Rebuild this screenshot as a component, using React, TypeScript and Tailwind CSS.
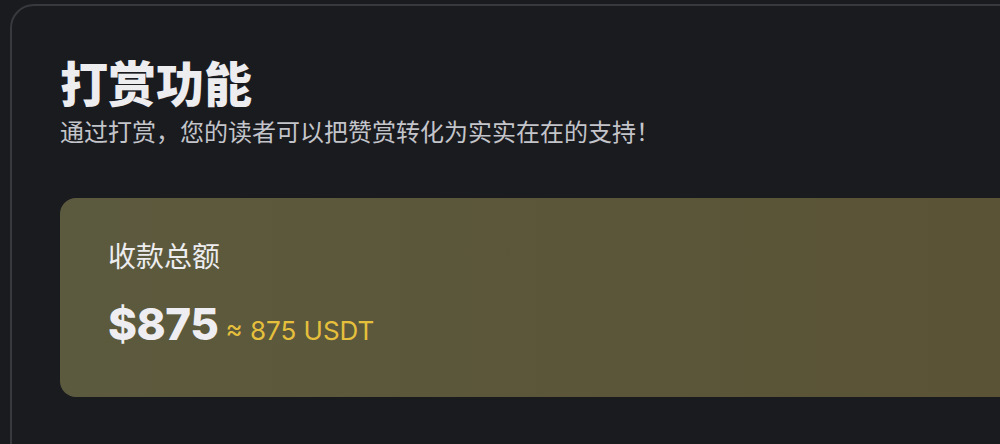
import React from 'react'

const cjk = { fontFamily: 'Inter, "Noto Sans CJK SC", sans-serif' }

export default function App() {
  return (
    <div className="h-[444px] w-[1000px] overflow-hidden bg-[#1a1b1f] pl-[10px] pt-1" style={cjk}>
      <div className="h-[600px] w-[1100px] rounded-[24px] border-2 border-[#38393e] bg-[#1a1b1f] pl-[48px] pt-[51px]">
        <h1 className="text-[48px] font-extrabold leading-[56px] text-[#ededf0]">打赏功能</h1>
        <p className="mt-1 text-[24px] leading-[32px] text-[#c4c5ca]">
          通过打赏，您的读者可以把赞赏转化为实实在在的支持！
        </p>

        <div className="mt-[49px] h-[199px] rounded-2xl bg-gradient-to-r from-[#5c5a3e] to-[#5a5235] pl-12 pt-[41px]">
          <div className="text-[28px] leading-[36px] text-[#ededf0]">收款总额</div>
          <div className="mt-[27px] flex items-baseline gap-[7px]">
            <span className="text-[44px] font-extrabold tracking-[-0.5px] leading-none text-[#eeeef2]">$875</span>
            <span className="text-[26px] leading-none text-[#e6c03c]">≈ 875 USDT</span>
          </div>
        </div>
      </div>
    </div>
  )
}
